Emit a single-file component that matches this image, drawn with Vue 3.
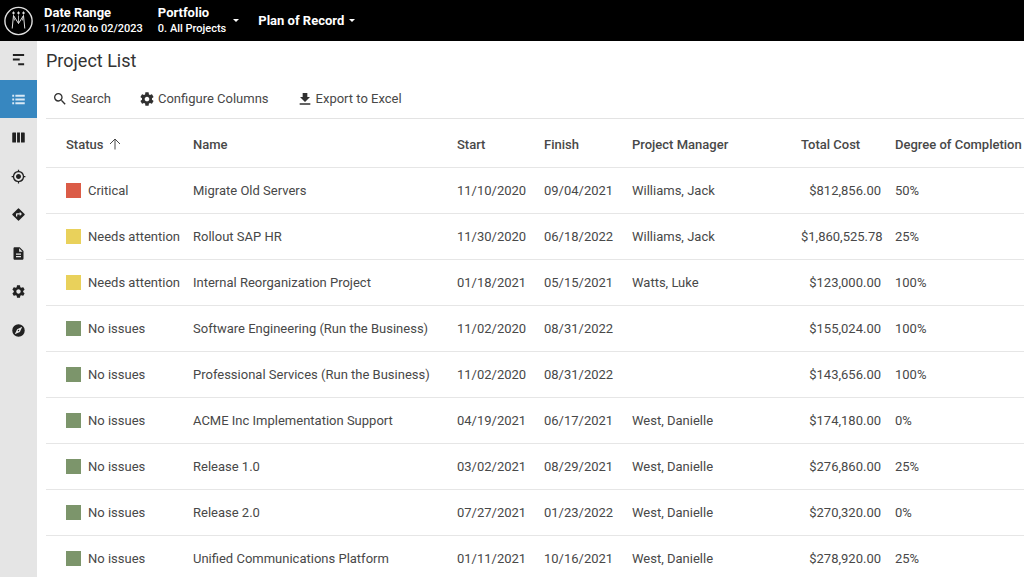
<script setup>
import { ref } from 'vue'

const active = ref('Project List')

const navItems = [
  { label: 'Timeline', path: 'M3 1.500h18v3.200H3zM3 8.900h11v3.200H3zM11.500 16.300H21v3.200h-9.500z' },
  { label: 'Project List', path: 'M2 4.500h3v3H2zM7 4.500h15v3H7zM2 10.500h3v3H2zM7 10.500h15v3H7zM2 16.500h3v3H2zM7 16.500h15v3H7z' },
  { label: 'Board', path: 'M3 4h4.500q.5 0 .5.500v15q0 .5-.5.500H3q-1 0-1-1V5q0-1 1-1zM9.700 4h4.600v16H9.700zM16.500 4H21q1 0 1 1v14q0 1-1 1h-4.500q-.5 0-.5-.5v-15q0-.5.500-.5z' },
  { label: 'Targets', path: 'M12 8c-2.210 0-4 1.790-4 4s1.790 4 4 4 4-1.790 4-4-1.790-4-4-4zm8.940 3A8.994 8.994 0 0 0 13 3.060V1h-2v2.060A8.994 8.994 0 0 0 3.060 11H1v2h2.060A8.994 8.994 0 0 0 11 20.940V23h2v-2.060A8.994 8.994 0 0 0 20.940 13H23v-2h-2.060zM12 19c-3.870 0-7-3.130-7-7s3.130-7 7-7 7 3.130 7 7-3.130 7-7 7z' },
  { label: 'Roadmap', path: 'M21.710 11.290l-9-9a.996.996 0 0 0-1.410 0l-9 9a.996.996 0 0 0 0 1.410l9 9c.39.390 1.020.390 1.410 0l9-9a.996.996 0 0 0 0-1.410zM14 14.500V12h-4v3H8v-4c0-.55.450-1 1-1h5V7.500l3.500 3.500-3.500 3.500z' },
  { label: 'Reports', path: 'M14 2H6c-1.100 0-1.990.900-1.990 2L4 20c0 1.100.890 2 1.990 2H18c1.100 0 2-.9 2-2V8l-6-6zm2 16H8v-2h8v2zm0-4H8v-2h8v2zm-3-5V3.500L18.500 9H13z' },
  { label: 'Settings', gear: true },
  { label: 'Explore', path: 'M12 2a10 10 0 1 0 0 20 10 10 0 0 0 0-20zM18 6l-3.800 8.200L6 18l3.800-8.200zM12 10.900a1.100 1.100 0 1 0 0 2.200 1.100 1.100 0 0 0 0-2.200z' }
]

const gearPath = 'M19.430 12.980c.04-.32.070-.64.070-.98s-.03-.66-.07-.98l2.110-1.650c.19-.15.240-.42.120-.64l-2-3.460c-.12-.22-.39-.3-.61-.22l-2.490 1c-.52-.4-1.080-.73-1.690-.98l-.38-2.650A.488.488 0 0 0 14 2h-4c-.25 0-.46.180-.49.420l-.38 2.650c-.61.250-1.170.590-1.690.980l-2.490-1c-.23-.09-.49 0-.61.220l-2 3.460c-.13.220-.07.490.120.640l2.110 1.650c-.04.320-.07.650-.07.980s.030.660.070.980l-2.110 1.650c-.19.150-.24.420-.12.640l2 3.460c.12.220.390.300.610.220l2.490-1c.52.400 1.080.730 1.690.980l.38 2.650c.03.240.240.420.490.420h4c.25 0 .46-.18.490-.42l.38-2.650c.61-.25 1.170-.59 1.690-.98l2.490 1c.23.090.490 0 .61-.22l2-3.460c.12-.22.070-.49-.12-.64l-2.110-1.650zM12 15.500c-1.930 0-3.500-1.570-3.500-3.500s1.570-3.500 3.500-3.500 3.500 1.570 3.500 3.500-1.570 3.500-3.500 3.500z'

const tools = [
  { label: 'Search', path: 'M15.500 14h-.79l-.28-.27A6.471 6.471 0 0 0 16 9.500 6.500 6.500 0 1 0 9.500 16c1.610 0 3.090-.59 4.230-1.570l.27.280v.79l5 4.990L20.490 19l-4.990-5zm-6 0C7.010 14 5 11.990 5 9.500S7.010 5 9.500 5 14 7.010 14 9.500 11.990 14 9.500 14z' },
  { label: 'Configure Columns', path: gearPath },
  { label: 'Export to Excel', path: 'M19.500 9H15.500V3h-7v6h-4l7.500 7.500zM4 18.500v2.200h16v-2.200z' }
]

const columns = [
  { key: 'status', title: 'Status' },
  { key: 'name', title: 'Name' },
  { key: 'start', title: 'Start' },
  { key: 'finish', title: 'Finish' },
  { key: 'manager', title: 'Project Manager' },
  { key: 'cost', title: 'Total Cost' },
  { key: 'degree', title: 'Degree of Completion' }
]

const statusClass = { Critical: 'red', 'Needs attention': 'yellow', 'No issues': 'green' }

const projects = [
  ['Critical', 'Migrate Old Servers', '11/10/2020', '09/04/2021', 'Williams, Jack', '$812,856.00', '50%'],
  ['Needs attention', 'Rollout SAP HR', '11/30/2020', '06/18/2022', 'Williams, Jack', '$1,860,525.78', '25%'],
  ['Needs attention', 'Internal Reorganization Project', '01/18/2021', '05/15/2021', 'Watts, Luke', '$123,000.00', '100%'],
  ['No issues', 'Software Engineering (Run the Business)', '11/02/2020', '08/31/2022', '', '$155,024.00', '100%'],
  ['No issues', 'Professional Services (Run the Business)', '11/02/2020', '08/31/2022', '', '$143,656.00', '100%'],
  ['No issues', 'ACME Inc Implementation Support', '04/19/2021', '06/17/2021', 'West, Danielle', '$174,180.00', '0%'],
  ['No issues', 'Release 1.0', '03/02/2021', '08/29/2021', 'West, Danielle', '$276,860.00', '25%'],
  ['No issues', 'Release 2.0', '07/27/2021', '01/23/2022', 'West, Danielle', '$270,320.00', '0%'],
  ['No issues', 'Unified Communications Platform', '01/11/2021', '10/16/2021', 'West, Danielle', '$278,920.00', '25%']
]
</script>

<template>
  <div class="app">
    <header class="topbar">
      <a class="logo" href="#" aria-label="Home">
        <svg viewBox="0 0 30 30" width="30" height="30" fill="none" stroke="#e0e0e0">
          <circle cx="15.500" cy="15" r="13.600" stroke-width="1.400" />
          <path d="M9.200 22.500 10.500 9.500 15.500 17.500 20.500 9.500 21.800 22.500" />
          <path d="M15.500 9.500v8M10.500 9.500l1.200 5M20.500 9.500l-1.200 5" stroke-width=".8" />
          <path d="M10.500 5.500v3M15.500 5.500v3M20.500 5.500v3M9 7h3M14 7h3M19 7h3" stroke-width="1" />
        </svg>
      </a>
      <button class="picker range" type="button">
        <span class="stack"><strong>Date Range</strong><span class="sub">11/2020 to 02/2023</span></span>
      </button>
      <button class="picker portfolio" type="button">
        <span class="stack"><strong>Portfolio</strong><span class="sub">0. All Projects</span></span>
        <span class="caret"></span>
      </button>
      <button class="picker plan" type="button">
        <strong>Plan of Record</strong>
        <span class="caret"></span>
      </button>
    </header>

    <div class="body">
      <nav class="sidebar" aria-label="Main">
        <button
          v-for="item in navItems"
          :key="item.label"
          type="button"
          class="nav-item"
          :class="{ active: active === item.label }"
          :aria-label="item.label"
          @click="active = item.label"
        >
          <svg viewBox="0 0 24 24" width="15" height="15" fill="currentColor" fill-rule="evenodd">
            <path :d="item.gear ? gearPath : item.path" />
          </svg>
        </button>
      </nav>

      <main class="content">
        <h1>Project List</h1>
        <div class="toolbar">
          <button v-for="tool in tools" :key="tool.label" type="button" class="tool">
            <svg viewBox="0 0 24 24" width="16" height="16" fill="currentColor"><path :d="tool.path" /></svg>
            <span>{{ tool.label }}</span>
          </button>
        </div>
        <table>
          <colgroup>
            <col v-for="c in columns" :key="c.key" :class="'col-' + c.key" />
          </colgroup>
          <thead>
            <tr>
              <th v-for="c in columns" :key="c.key" scope="col">
                {{ c.title }}
                <svg v-if="c.key === 'status'" class="sort" viewBox="0 0 12 12" width="12" height="12" fill="none" stroke="currentColor">
                  <path d="M6 11.500V1M1 6l5-5 5 5" />
                </svg>
              </th>
            </tr>
          </thead>
          <tbody>
            <tr v-for="row in projects" :key="row[1]">
              <td v-for="(value, i) in row" :key="i" :class="{ money: i === 5 }">
                <span v-if="i === 0" class="status"><i class="swatch" :class="statusClass[value]"></i>{{ value }}</span>
                <template v-else>{{ value }}</template>
              </td>
            </tr>
          </tbody>
        </table>
      </main>
    </div>
  </div>
</template>

<style>
body {
  background: #fff;
  overflow: hidden;
}
</style>

<style scoped>
.app {
  display: flex;
  flex-direction: column;
  min-height: 100vh;
  font-family: Roboto, "Liberation Sans", sans-serif;
  font-size: 13px;
  color: #484848;
}
button {
  border: 0;
  padding: 0;
  background: none;
  font: inherit;
  color: inherit;
  cursor: pointer;
}
.topbar {
  display: flex;
  align-items: center;
  height: 41px;
  padding-left: 3px;
  background: #000;
  color: #fff;
}
.logo {
  display: flex;
  margin-right: 11px;
}
.picker {
  display: flex;
  align-items: center;
  gap: 5px;
  text-align: left;
  white-space: nowrap;
}
.picker strong {
  font-weight: 700;
  line-height: 16px;
}
.stack {
  display: flex;
  flex-direction: column;
}
.sub {
  font-size: 11px;
  font-weight: 500;
  line-height: 16px;
}
.range {
  margin-right: 15px;
}
.portfolio {
  gap: 7px;
  margin-right: 19px;
}
.caret {
  border: 3px solid transparent;
  border-top-color: #fff;
  border-bottom: 0;
}
.body {
  display: flex;
  flex: 1;
}
.sidebar {
  display: flex;
  flex: none;
  flex-direction: column;
  width: 37px;
  background: #e5e5e5;
}
.nav-item {
  display: flex;
  align-items: center;
  justify-content: center;
  height: 39px;
  color: #212121;
}
.nav-item:nth-child(even) {
  height: 38px;
}
.nav-item.active {
  background: #3787c0;
  color: #d9e9f5;
}
.content {
  flex: 1;
  min-width: 0;
  padding-left: 9px;
}
h1 {
  margin: 0;
  padding-top: 8px;
  font-size: 18px;
  font-weight: 400;
  line-height: 24px;
  color: #333;
}
.toolbar {
  display: flex;
  gap: 28px;
  height: 39px;
  padding: 6px 0 0 6px;
  border-bottom: 1px solid #e3e3e3;
}
.tool {
  display: flex;
  align-items: center;
  gap: 3px;
}
.tool svg {
  color: #303030;
}
table {
  width: 100%;
  table-layout: fixed;
  border-collapse: separate;
  border-spacing: 0;
}
.col-status { width: 140px; }
.col-start { width: 87px; }
.col-finish { width: 88px; }
.col-manager { width: 169px; }
.col-cost { width: 94px; }
.col-degree { width: 136px; }
th,
td {
  box-sizing: border-box;
  height: 46px;
  padding: 0 0 0 7px;
  border-bottom: 1px solid #e6e6e6;
  text-align: left;
  vertical-align: middle;
  white-space: nowrap;
}
th {
  height: 49px;
  padding-top: 3px;
  font-weight: 500;
}
th:first-child,
td:first-child {
  padding-left: 20px;
}
td.money {
  padding-right: 7px;
  text-align: right;
}
.sort {
  margin-left: 2px;
  vertical-align: -1px;
}
.status {
  display: flex;
  align-items: center;
  gap: 7px;
}
.swatch {
  width: 15px;
  height: 15px;
}
.red { background: #db5c47; }
.yellow { background: #e9d15b; }
.green { background: #7c956b; }
</style>
